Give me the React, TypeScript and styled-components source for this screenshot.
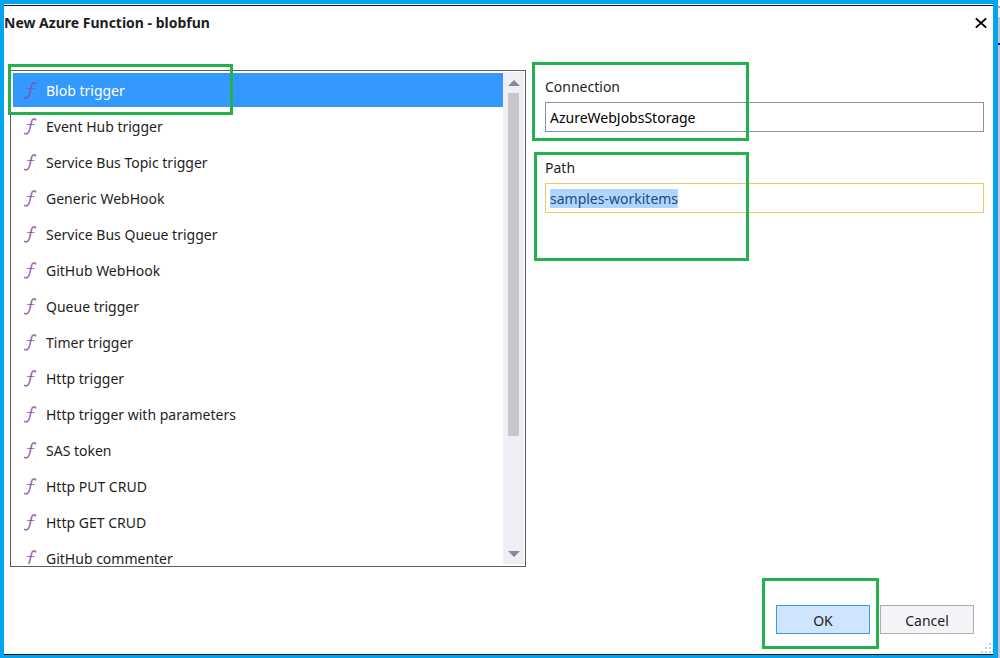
import { useEffect, useRef, useState } from "react";
import styled, { createGlobalStyle, css } from "styled-components";

const GlobalStyle = createGlobalStyle`
  *, *::before, *::after { box-sizing: border-box; }
  body { margin: 0; background: #fff; }
  body, button, input {
    font-family: "Noto Sans", "Open Sans", sans-serif;
    font-size: 14px;
    line-height: 20px;
    color: #1e1e1e;
  }
`;

const Desktop = styled.div`
  display: flex;
  min-height: 100vh;
`;

const WindowBehind = styled.div`
  width: 2px;
  background: linear-gradient(
    #fff 0 6px, #a9a6bd 6px 8px, #f4f4f8 8px 17px, #c4c4c8 17px 43px,
    #1414c8 43px 45px, #c9c4cb 45px
  );
`;

const Frame = styled.div`
  flex: 1;
  display: flex;
  border: solid #00a4ef;
  border-width: 4px 5px 3px 4px;
`;

const Dialog = styled.main`
  flex: 1;
  display: flex;
  flex-direction: column;
  margin-top: 1px;
  border: solid #101828;
  border-width: 1px 0;
  background: #fff;
`;

const TitleBar = styled.header`
  display: flex;
  align-items: center;
  justify-content: space-between;
  height: 34px;
  padding-right: 4px;
`;

const Title = styled.h1`
  margin: 0;
  font-size: 14px;
  line-height: 20px;
  font-weight: 700;
`;

const CloseButton = styled.button`
  display: flex;
  padding: 2px;
  border: 0;
  background: none;
`;

const Body = styled.div`
  flex: 1;
  display: grid;
  grid-template-columns: minmax(0, 516fr) minmax(0, 439fr);
  gap: 19px;
  padding: 30px 9px 0 6px;
`;

const ListFrame = styled.div`
  position: relative;
  display: flex;
  border: 1px solid #5c5c5c;
  padding: 1px 1px 2px 2px;
`;

const ListViewport = styled.div`
  flex: 1;
  position: relative;
  contain: size;
  overflow: hidden;
`;

const List = styled.ul`
  display: flex;
  flex-direction: column;
  gap: 2px;
  margin: 0;
  padding: 1px 0 0;
  list-style: none;
`;

const Row = styled.button<{ $selected: boolean }>`
  display: flex;
  align-items: center;
  gap: 8px;
  width: 100%;
  height: 34px;
  padding: 2px 10px 0;
  border: 0;
  text-align: left;
  background: ${(p) => (p.$selected ? "#3399ff" : "transparent")};
  color: ${(p) => (p.$selected ? "#fff" : "#1e1e1e")};
`;

const ScrollTrack = styled.div`
  display: flex;
  flex-direction: column;
  align-items: center;
  gap: 7px;
  width: 21px;
  padding: 8px 0 7px;
  background: #eeeef4;
`;

const ScrollSpace = styled.div`
  flex: 1;
  width: 11px;
`;

const ScrollThumb = styled.div`
  height: 76%;
  background: #c6c7cb;
`;

const Fields = styled.div`
  display: flex;
  flex-direction: column;
  gap: 26px;
  padding-top: 7px;
`;

const Field = styled.div`
  position: relative;
  display: flex;
  flex-direction: column;
  gap: 5px;
`;

const TextBox = styled.input<{ $active?: boolean }>`
  width: 100%;
  height: 30px;
  padding: 0 4px;
  border: 1px solid ${(p) => (p.$active ? "#efc966" : "#8591a8")};
  border-radius: 0;
  outline: 0;
  background: #fff;
  color: #000;
  &::selection { background: #add6ff; color: #1f4a78; }
`;

const Footer = styled.footer`
  position: relative;
  display: flex;
  justify-content: flex-end;
  gap: 10px;
  padding: 38px 19px 20px;
`;

const ButtonSlot = styled.div`
  position: relative;
  display: flex;
`;

const PushButton = styled.button<{ $primary?: boolean }>`
  width: 94px;
  height: 29px;
  padding: 2px 0 0;
  ${(p) =>
    p.$primary
      ? css`border: 1px solid #3399ff; background: #cfe4fd;`
      : css`border: 1px solid #acacac; background: #f4f4f8;`}
`;

const Grip = styled.svg`
  position: absolute;
  right: 2px;
  bottom: 1px;
`;

const Highlight = styled.span<{ $inset: string; $width: number }>`
  position: absolute;
  inset: ${(p) => p.$inset};
  width: ${(p) => p.$width}px;
  border: 3px solid #22b14c;
  pointer-events: none;
`;

const RowHighlight = styled(Highlight)`
  height: 51px;
`;

const templates = [
  "Blob trigger",
  "Event Hub trigger",
  "Service Bus Topic trigger",
  "Generic WebHook",
  "Service Bus Queue trigger",
  "GitHub WebHook",
  "Queue trigger",
  "Timer trigger",
  "Http trigger",
  "Http trigger with parameters",
  "SAS token",
  "Http PUT CRUD",
  "Http GET CRUD",
  "GitHub commenter",
];

const FunctionIcon = () => (
  <svg width="15" height="20" viewBox="0 0 15 20" fill="none" stroke="#8a4ba3" strokeOpacity=".8" strokeLinecap="round" aria-hidden="true">
    <path d="M12.6 2.6C11.2 1.2 9.3 1.6 8.6 4.4L6.6 12.6C5.8 15.8 4.2 17.6 1.6 16.4" strokeWidth="1.7" />
    <path d="M4.6 7.5H11" strokeWidth="1.1" />
  </svg>
);

const Arrow = ({ down = false }: { down?: boolean }) => (
  <svg width="12" height="6" viewBox="0 0 12 6" fill="#868999" aria-hidden="true">
    <path d={down ? "M0 0H12L6 6Z" : "M0 6H12L6 0Z"} />
  </svg>
);

export default function App() {
  const [selected, setSelected] = useState(0);
  const path = useRef<HTMLInputElement>(null);

  useEffect(() => {
    path.current?.focus();
    path.current?.select();
  }, []);

  return (
    <Desktop>
      <GlobalStyle />
      <Frame>
        <Dialog>
          <TitleBar>
            <Title>New Azure Function - blobfun</Title>
            <CloseButton aria-label="Close">
              <svg width="12" height="10" viewBox="0 0 12 10" stroke="#000" strokeWidth="1.9" aria-hidden="true">
                <path d="M.8 .4L11.2 9.6M11.2 .4L.8 9.6" />
              </svg>
            </CloseButton>
          </TitleBar>
          <Body>
            <ListFrame>
              <ListViewport>
                <List>
                  {templates.map((name, i) => (
                    <li key={name}>
                      <Row $selected={i === selected} aria-pressed={i === selected} onClick={() => setSelected(i)}>
                        <FunctionIcon />
                        {name}
                      </Row>
                    </li>
                  ))}
                </List>
              </ListViewport>
              <ScrollTrack>
                <Arrow />
                <ScrollSpace>
                  <ScrollThumb />
                </ScrollSpace>
                <Arrow down />
              </ScrollTrack>
              <RowHighlight $inset="-7px auto auto -3px" $width={225} />
            </ListFrame>
            <Fields>
              <Field>
                <label htmlFor="connection">Connection</label>
                <TextBox id="connection" defaultValue="AzureWebJobsStorage" />
                <Highlight $inset="-15px auto -9px -13px" $width={217} />
              </Field>
              <Field>
                <label htmlFor="path">Path</label>
                <TextBox id="path" ref={path} $active defaultValue="samples-workitems" />
                <Highlight $inset="-6px auto -48px -11px" $width={215} />
              </Field>
            </Fields>
          </Body>
          <Footer>
            <ButtonSlot>
              <PushButton $primary>OK</PushButton>
              <Highlight $inset="-27px auto -15px -14px" $width={117} />
            </ButtonSlot>
            <PushButton>Cancel</PushButton>
            <Grip width="10" height="10" viewBox="0 0 10 10" fill="#c3cbdc" aria-hidden="true">
              <path d="M8 0h2v2h-2zM4 4h2v2h-2zM8 4h2v2h-2zM0 8h2v2h-2zM4 8h2v2h-2zM8 8h2v2h-2z" />
            </Grip>
          </Footer>
        </Dialog>
      </Frame>
      <WindowBehind />
    </Desktop>
  );
}
